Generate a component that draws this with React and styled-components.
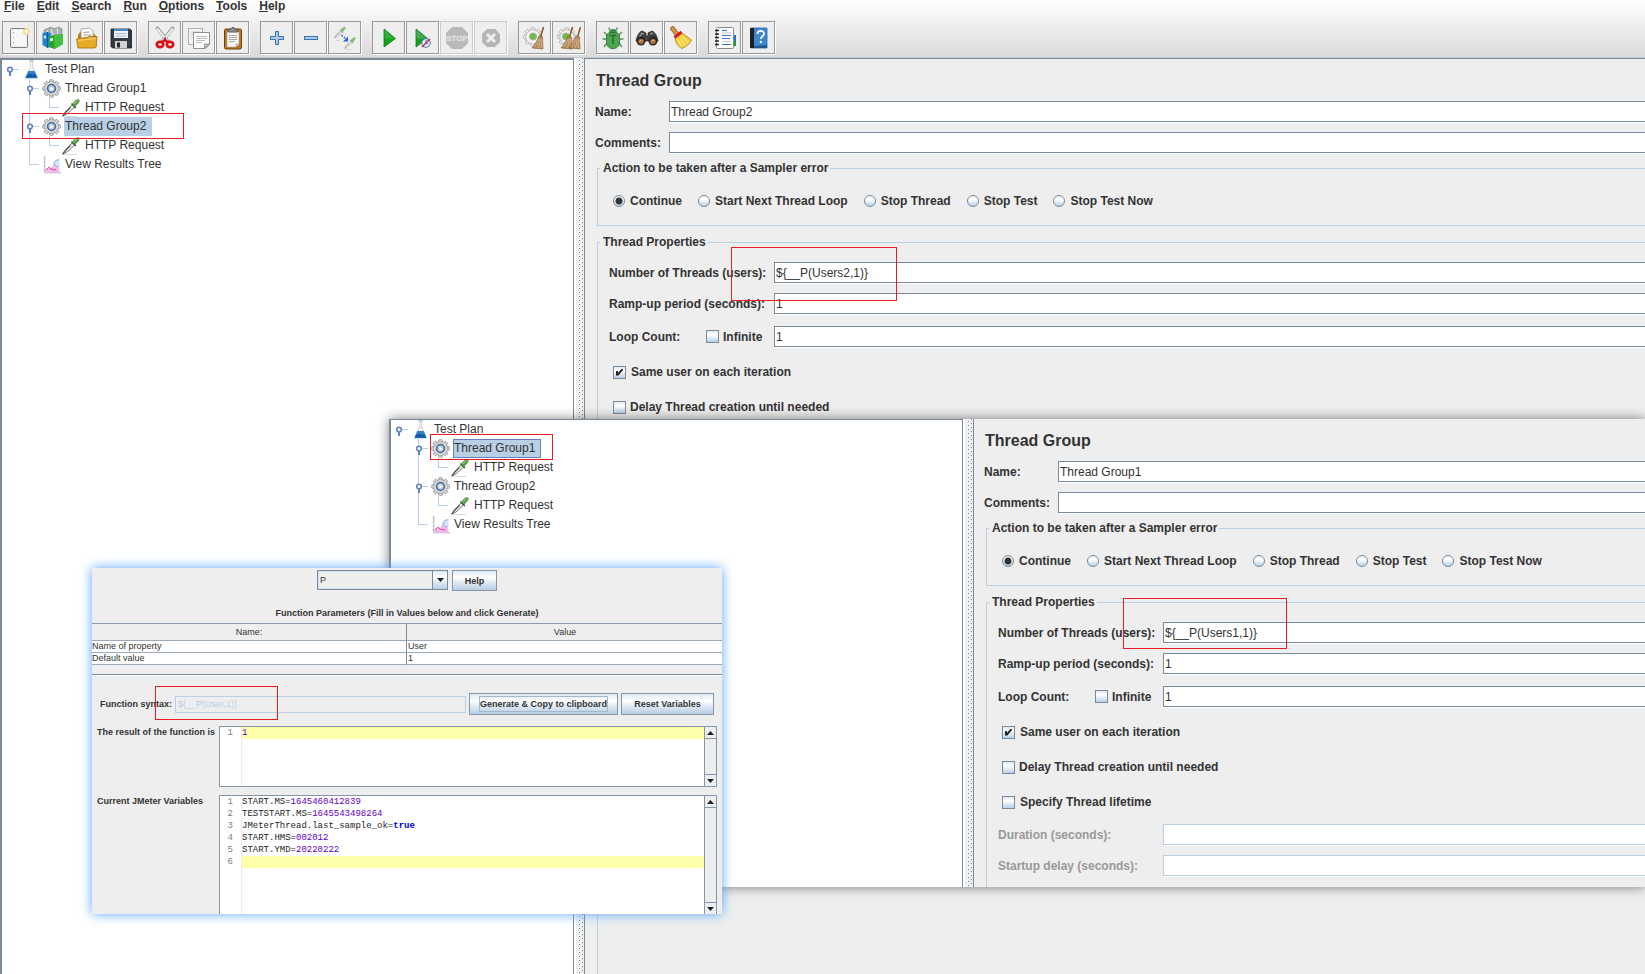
import React from 'react';
import styled, { createGlobalStyle, css } from 'styled-components';

const GlobalStyle = createGlobalStyle`
    * {
        box-sizing: border-box;
    }

    body {
        margin: 0;
        overflow: hidden;
        background-color: #eeeeee;
        color: #333333;
        font-family: "Liberation Sans", Arial, sans-serif;
        font-size: 12px;
    }

    button, input, select {
        font-family: inherit;
        font-size: inherit;
        color: inherit;
    }

    ul, ol {
        list-style: none;
        margin: 0;
        padding: 0;
    }
`;

const metal = 'linear-gradient(#dfe9f3, #ffffff 35%, #dbe6f1 65%, #b8cfe5)';

const Desktop = styled.div`
    position: relative;
    display: flex;
    flex-direction: column;
    min-height: 100vh;
    overflow: hidden;
`;

const Header = styled.header`
    height: 58px;
    background: linear-gradient(#ffffff, #dadada);
    border-bottom: 1px solid #c8ccd0;
`;

const MenuBar = styled.nav`
    display: flex;
    height: 21px;
`;

const MenuButton = styled.button`
    height: 12px;
    padding: 0 8px 0 4px;
    border: none;
    background: none;
    font-weight: bold;
    line-height: 12px;

    &:first-letter {
        text-decoration: underline;
    }
`;

const ToolBar = styled.div`
    display: flex;
    gap: 11px;
    padding-left: 2px;
`;

const ToolGroup = styled.div`
    display: flex;
    gap: 1px;
`;

const ToolButton = styled.button`
    display: flex;
    align-items: center;
    justify-content: center;
    width: 33px;
    height: 33px;
    padding: 0;
    border: 1px solid #999999;
    background-color: #eeeeee;
    box-shadow: 1px 1px 0 #ffffff;

    &:disabled {
        border-color: #cccccc;
    }
`;

const Split = styled.div`
    display: flex;
    flex: 1;
    overflow: hidden;
    background-color: #eeeeee;
`;

const TreePane = styled.div`
    flex: 0 0 574px;
    padding-left: 4px;
    border: solid #7a8a99;
    border-width: ${(props) => (props.$cut ? '1px' : '2px')} 1px 0 2px;
    background-color: #ffffff;
`;

const Divider = styled.div`
    flex: 0 0 10px;
    background:
        conic-gradient(at 1px 1px, transparent 75%, #7a8a99 0) 5px 2px / 10px 4px,
        conic-gradient(at 1px 1px, transparent 75%, #7a8a99 0) 8px 4px / 10px 4px,
        conic-gradient(at 1px 1px, transparent 75%, #ffffff 0) 6px 3px / 10px 4px,
        conic-gradient(at 1px 1px, transparent 75%, #ffffff 0) 4px 1px / 10px 4px,
        linear-gradient(90deg, #ffffff 2px, #eeeeee 2px);
`;

const Pane = styled.main`
    flex: 1;
    display: flex;
    flex-direction: column;
    min-width: 0;
    padding: 12px 0 0 10px;
    border-left: 1px solid #7a8a99;
    border-top: ${(props) => (props.$cut ? 'none' : '1px solid #7a8a99')};
`;

const Branch = styled.ul`
    margin-left: 20px;
    background: linear-gradient(#b8cfe5, #b8cfe5) no-repeat 3px 0 / 1px calc(100% - 10px);
`;

const Row = styled.div`
    display: flex;
    align-items: center;
    height: 19px;
`;

const Stub = styled.span`
    width: 16px;
    height: 19px;
    background: linear-gradient(#b8cfe5, #b8cfe5) no-repeat 3px 9px / 10px 1px;
`;

const NodeLabel = styled.span`
    height: 19px;
    margin-left: 3px;
    padding: 0 6px 0 1px;
    line-height: 19px;
    white-space: nowrap;
    ${(props) => props.$selected && css`
        background-color: #b8cfe5;
    `}
    ${(props) => props.$focused && css`
        box-shadow: inset 0 0 0 1px #6382bf;
    `}
`;

const Title = styled.h1`
    margin: 0 0 10px 1px;
    font-size: 16px;
    line-height: 20px;
`;

const Line = styled.div`
    display: flex;
    align-items: center;
    height: ${(props) => props.$height || '21px'};
    margin-bottom: ${(props) => props.$gap || '10px'};
    padding-left: ${(props) => (props.$check ? '4px' : '0')};
`;

const FieldLabel = styled.label`
    flex: 0 0 ${(props) => props.$width};
    font-weight: bold;
    white-space: nowrap;
    color: ${(props) => (props.$disabled ? '#999999' : 'inherit')};
`;

const TextField = styled.input`
    flex: 1;
    min-width: 0;
    height: 21px;
    padding: 0 1px;
    border: 1px solid #7a8a99;
    border-right: none;
    outline: none;
    background-color: #ffffff;
    box-shadow: 0 1px 0 #ffffff;

    &:disabled {
        border-color: #b8cfe5;
    }
`;

const Group = styled.fieldset`
    margin: 0 0 9px 2px;
    padding: 0;
    border: 1px solid #b8cfe5;
    border-right: none;
    min-width: 0;
    ${(props) => props.$grow && css`
        flex: 1;
        margin-bottom: 0;
        border-bottom: none;
    `}
`;

const GroupTitle = styled.legend`
    margin-left: 2px;
    padding: 0 2px 0 3px;
    font-weight: bold;
    line-height: 14px;
`;

const Radios = styled.div`
    display: flex;
    gap: 16px;
    height: 50px;
    padding: 16px 0 14px 15px;
`;

const Fields = styled.div`
    padding: 13px 0 0 11px;
`;

const Option = styled.label`
    display: flex;
    align-items: center;
    gap: ${(props) => props.$gap || '5px'};
    font-weight: bold;
    white-space: nowrap;
`;

const Radio = styled.input.attrs({ type: 'radio' })`
    appearance: none;
    width: 12px;
    height: 12px;
    margin: 0;
    border: 1px solid #7a8a99;
    border-radius: 50%;
    background: linear-gradient(#eef3f8, #ffffff 35%, #b8cfe5);

    &:checked {
        background: radial-gradient(circle, #333333 3px, transparent 4px), linear-gradient(#eef3f8, #ffffff 35%, #b8cfe5);
    }
`;

const Check = styled.input.attrs({ type: 'checkbox' })`
    appearance: none;
    display: grid;
    place-items: center;
    width: 13px;
    height: 13px;
    margin: 0;
    border: 1px solid #7a8a99;
    background: linear-gradient(#dfe9f3, #ffffff 35%, #b8cfe5);

    &:checked::before {
        content: '';
        width: 7px;
        height: 7px;
        background-color: #222222;
        clip-path: polygon(0 35%, 25% 35%, 30% 60%, 85% 0, 100% 0, 100% 20%, 35% 100%, 0 100%);
    }
`;

const LoopLine = styled.div`
    display: flex;
    align-items: center;
    flex: 0 0 165px;
`;

const FloatingWindow = styled.section`
    position: absolute;
    top: 419px;
    left: 389px;
    right: 0;
    display: flex;
    height: 468px;
    box-shadow: 0 0 11px rgba(0, 0, 0, 0.5);
`;

const Mark = styled.div`
    position: absolute;
    top: ${(props) => props.$top};
    left: ${(props) => props.$left};
    width: ${(props) => props.$width};
    height: ${(props) => props.$height};
    border: 1px solid #ed1c24;
    pointer-events: none;
`;

const Dialog = styled.section`
    position: absolute;
    top: 568px;
    left: 92px;
    display: flex;
    flex-direction: column;
    width: 630px;
    height: 346px;
    padding-top: 2px;
    background-color: #eeeeee;
    box-shadow: 0 0 11px #5aa5ff;
    font-size: 9px;
`;

const Chooser = styled.div`
    display: flex;
    justify-content: center;
    gap: 4px;
`;

const Combo = styled.div`
    display: flex;
    width: 131px;
    height: 20px;
    border: 1px solid #7a8a99;
    box-shadow: inset 0 0 0 1px #d5dfe9;
`;

const ComboSelect = styled.select`
    appearance: none;
    flex: 1;
    padding: 0 2px;
    border: none;
    outline: none;
    background: none;
`;

const ComboArrow = styled.span`
    display: flex;
    align-items: center;
    justify-content: center;
    width: 15px;
    border-left: 1px solid #7a8a99;
    background: ${metal};
`;

const PushButton = styled.button`
    width: ${(props) => props.$width};
    height: ${(props) => props.$height || '22px'};
    padding: 0;
    border: 1px solid #8496a8;
    background: ${metal};
    font-weight: bold;
    white-space: nowrap;

    span {
        padding: 2px 0;
        outline: ${(props) => (props.$focused ? '1px solid #a3b8cc' : 'none')};
    }
`;

const Caption = styled.h2`
    margin: 16px 0 4px;
    font-size: 9px;
    line-height: 12px;
    text-align: center;
`;

const ParamTable = styled.table`
    width: 100%;
    border-spacing: 0;
    border-top: 1px solid #8e9cab;
    table-layout: fixed;

    th, td {
        padding: 0;
        border-bottom: 1px solid #9caab8;
        line-height: 11px;
    }

    th {
        height: 17px;
        font-weight: normal;
    }

    td {
        height: 12px;
        background-color: #ffffff;
    }

    th + th, td + td {
        padding-left: 1px;
    }

    th:first-child, td:first-child {
        border-right: 1px solid #7a8a99;
    }
`;

const Rule = styled.hr`
    width: 100%;
    height: 2px;
    margin: 9px 0 17px;
    border: none;
    border-top: 1px solid #7a8a99;
    border-bottom: 1px solid #ffffff;
`;

const SyntaxRow = styled.div`
    display: flex;
    align-items: center;
    gap: 3px;
    margin-bottom: 11px;
    padding: 0 8px;
`;

const SyntaxField = styled.input`
    flex: 1;
    min-width: 0;
    height: 17px;
    padding: 0 2px;
    border: 1px solid #b8cfe5;
    background-color: #eeeeee;
    color: #b8cfe5;
`;

const EditorRow = styled.div`
    display: flex;
    flex-shrink: 0;
    align-items: flex-start;
    height: ${(props) => props.$height};
    margin-bottom: ${(props) => props.$gap || '0'};
    padding: 0 5px;
    overflow: hidden;
`;

const EditorLabel = styled.span`
    flex: 0 0 122px;
    font-weight: bold;
    line-height: 12px;
`;

const Editor = styled.div`
    flex: 1;
    display: flex;
    height: 100%;
    border: 1px solid #8496a8;
    border-bottom-width: ${(props) => (props.$open ? '0' : '1px')};
    background: linear-gradient(#eeeeee, #eeeeee) no-repeat 21px 0 / 1px 100% #ffffff;
`;

const Code = styled.ol`
    flex: 1;
    font-family: "Liberation Mono", "DejaVu Sans Mono", monospace;
    line-height: 12px;
`;

const CodeLine = styled.li`
    display: flex;
    height: 12px;
    white-space: pre;

    i {
        width: 13px;
        margin-right: 9px;
        color: #808080;
        font-style: normal;
        text-align: right;
    }

    code {
        flex: 1;
        background-color: ${(props) => (props.$current ? '#ffffaa' : 'transparent')};
        font-family: inherit;
        color: #222222;
    }

    b {
        color: #0000e0;
    }

    em {
        color: #6400c8;
        font-style: normal;
    }
`;

const ScrollBar = styled.div`
    display: flex;
    flex-direction: column;
    justify-content: space-between;
    width: 12px;
    border-left: 1px solid #8496a8;
    background-color: #eeeeee;
`;

const ScrollButton = styled.button`
    display: flex;
    align-items: center;
    justify-content: center;
    height: 12px;
    padding: 0;
    border: solid #8496a8;
    border-width: ${(props) => (props.$down ? '1px 0 0' : '0 0 1px')};
    background-color: #eeeeee;
`;

/* ---------- icons ---------- */

const Icon = ({ children, size = 24 }) => (
    <svg width={size} height={size} viewBox="0 0 24 24" aria-hidden="true">{children}</svg>
);

const Arrow = ({ down }) => (
    <svg width="7" height="4" viewBox="0 0 7 4" aria-hidden="true">
        <path d={down ? 'M0 0h7L3.5 4z' : 'M0 4h7L3.5 0z'} fill="#222" />
    </svg>
);

const NewIcon = () => (
    <Icon>
        <rect x="3.5" y="2.5" width="17" height="19" rx="1" fill="#eee" stroke="#7d7d7d" />
        <path d="M5 4h14v16H5z" fill="#f7f7f7" />
        <path d="M6.5 6v1M6.5 11v1M6.5 16v1" stroke="#999" />
        <circle cx="19.5" cy="5.5" r="3.500" fill="#f8d99c" />
        <circle cx="19.5" cy="5.5" r="1.600" fill="#fffbe8" />
    </Icon>
);

const TemplatesIcon = () => (
    <Icon>
        <path d="M3 4l6-2.5 5 1 4-1.5 3 2v11l-9 3-9-3z" fill="#a9b0b2" stroke="#777" strokeWidth=".6" />
        <path d="M6 4l2 5M10 3l2 6M16 2.500l1 6" stroke="#eee" />
        <path d="M1.5 7l5-1 3 1v14l-3 1-5-3z" fill="#1d83cf" />
        <path d="M6.5 6v15.500" stroke="#0b5696" />
        <path d="M2.8 9.500l2.400.3v3l-2.400-.6z" fill="#bde2ff" />
        <path d="M8 11l5-2 9-1v10l-8.500 5L8 21z" fill="#2ca02c" />
        <path d="M13 9.500l9-1.500v10l-8.500 5z" fill="#43c13e" />
        <path d="M9 12.500l3-.7v3l-3 .7z" fill="#d8ffd0" />
    </Icon>
);

const OpenIcon = () => (
    <Icon>
        <path d="M3 9l2-3h4l1 2h9.500l1.500 2v10H3z" fill="#c07f10" />
        <path d="M6 3l9-1 3 3 .5 9H6z" fill="#fafafa" stroke="#999" strokeWidth=".8" />
        <path d="M8.5 6.500l6-.5M8.5 9h8M8.5 11.500h8" stroke="#999" strokeWidth=".9" />
        <path d="M1.500 13l4-1h6l2-1.500h8.500l-.8 10.500-1.200 1H3z" fill="#e7a928" stroke="#a26c10" strokeWidth=".8" />
        <path d="M3 14.500l18-2" stroke="#f8d374" />
    </Icon>
);

const SaveIcon = () => (
    <Icon>
        <path d="M2 3h19l1.500 1.500V22H3.500L2 20.500z" fill="#333b42" stroke="#16191c" strokeWidth=".8" />
        <rect x="5" y="3" width="14" height="9" fill="#edf3fa" />
        <path d="M5 4h14" stroke="#4e86c4" strokeWidth="2" />
        <path d="M6.500 7.500h11M6.500 10h11" stroke="#a9b8c8" />
        <rect x="6" y="15" width="12" height="7" fill="#cfd2d4" />
        <rect x="8" y="16.500" width="3" height="5" fill="#252a2f" />
    </Icon>
);

const CutIcon = () => (
    <Icon>
        <path d="M4.500 2.500L14.500 15M19.500 2.500L9.500 15" stroke="#8b8f8c" strokeWidth="3.600" strokeLinecap="round" />
        <path d="M4.500 3L14 14.500M19.500 3L10 14.500" stroke="#eceeea" strokeWidth="2.200" strokeLinecap="round" />
        <circle cx="12" cy="12" r="1" fill="#555" />
        <ellipse cx="7" cy="18.500" rx="3.200" ry="2.700" fill="none" stroke="#d80f18" strokeWidth="2.700" />
        <ellipse cx="17" cy="18.500" rx="3.200" ry="2.700" fill="none" stroke="#d80f18" strokeWidth="2.700" />
        <path d="M9 16.500l3-2.500 3 2.500" fill="none" stroke="#d80f18" strokeWidth="2.500" />
    </Icon>
);

const CopyIcon = () => (
    <Icon>
        <rect x="1.500" y="2.500" width="14" height="16" fill="#f3f3f3" stroke="#b0b0b0" />
        <path d="M4 6h9M4 8.500h9M4 11h9" stroke="#ccc" />
        <path d="M6.500 6.500h16v12l-4.500 4H6.500z" fill="#fbfbfb" stroke="#8f8f8f" />
        <path d="M9 10.500h11M9 12.500h11M9 14.500h9M9 16.500h6" stroke="#bbb" />
        <path d="M22.500 18h-5v4.500z" fill="#ccc" stroke="#777" strokeWidth=".7" />
    </Icon>
);

const PasteIcon = () => (
    <Icon>
        <rect x="3.500" y="3" width="17" height="20" rx="1.500" fill="#b8751d" stroke="#714307" />
        <path d="M6 6h12v12l-3 3H6z" fill="#f6f6f6" stroke="#aaa" strokeWidth=".6" />
        <path d="M8 9.500h8M8 11.500h8M8 13.500h8M8 15.500h6" stroke="#aaa" />
        <path d="M7.500 6V3.500l3-.5.500-1.500h2l.5 1.500 3 .5V6z" fill="#8c9195" stroke="#4c4f51" strokeWidth=".8" />
        <path d="M18 17.500h-3.500V21z" fill="#bbb" />
    </Icon>
);

const PlusIcon = () => (
    <Icon>
        <path d="M10.500 5.500h3v5h5v3h-5v5h-3v-5h-5v-3h5z" fill="#a9cbed" stroke="#3b73b0" />
    </Icon>
);

const MinusIcon = () => (
    <Icon>
        <rect x="5.500" y="10.500" width="13" height="3" fill="#a9cbed" stroke="#3b73b0" />
    </Icon>
);

const Pipette = ({ pale }) => (
    <g>
        <path d="M1 23l2.500-5L13 8.500l3 3L6.500 20z" fill="#e8ebe8" stroke={pale ? '#aaa' : '#777'} strokeWidth="1.200" />
        <path d="M1 23l4-5 6-6" stroke={pale ? '#999' : '#222'} strokeWidth="1.200" fill="none" />
        <path d="M12 7l5.500 5.500" stroke={pale ? '#7d9b78' : '#335c2b'} strokeWidth="2" />
        <path d="M13 7.500c2.500-4 6-7 8.500-5.500s-1.500 6.500-5 9z" fill={pale ? '#7dbb70' : '#5c9f4c'} />
        <path d="M15 7.500l4-4" stroke="#a9d69c" strokeWidth="1.200" />
    </g>
);

const ToggleIcon = () => (
    <Icon>
        <g transform="translate(1 0) scale(.52)"><Pipette pale /></g>
        <g transform="translate(11 10.500) scale(.52)"><Pipette pale /></g>
        <path d="M8.500 9l4.500 4" stroke="#2463d6" strokeWidth="1.300" strokeDasharray="2 1" />
        <path d="M15 10.500v5h-5z" fill="#2463d6" />
        <path d="M2 14.500h5M12 23.500h6" stroke="#ccc" strokeWidth=".7" />
    </Icon>
);

const StartIcon = () => (
    <Icon>
        <path d="M7 3l11.500 9.500L7 21z" fill="#14a31b" stroke="#087a10" strokeWidth=".8" />
        <path d="M7.500 4l10 8.500H7.500z" fill="#48bb4b" opacity=".6" />
    </Icon>
);

const StartNoPauseIcon = () => (
    <Icon>
        <path d="M5 3l11.500 9.500L5 21z" fill="#14a31b" stroke="#087a10" strokeWidth=".8" />
        <path d="M5.500 4l10 8.500h-10z" fill="#63aa72" opacity=".7" />
        <circle cx="15" cy="17" r="4.300" fill="#e3effa" stroke="#3c7fbe" />
        <path d="M15 17v-3M15 17l2 1" stroke="#3c7fbe" />
        <path d="M11 21l8-8" stroke="#d2232a" strokeWidth="1.500" />
    </Icon>
);

const StopIcon = () => (
    <Icon>
        <path d="M7 1h10l6 6v10l-6 6H7l-6-6V7z" fill="#b9b9b9" />
        <text x="12" y="15" textAnchor="middle" fontSize="8" fontWeight="bold" fill="#e2e2e2" stroke="#e2e2e2" strokeWidth=".3">STOP</text>
    </Icon>
);

const ShutdownIcon = () => (
    <Icon>
        <path d="M8 3h8l5 5v8l-5 5H8l-5-5V8z" fill="#b5b5b5" />
        <path d="M8 8l8 8M16 8l-8 8" stroke="#eee" strokeWidth="3" />
    </Icon>
);

const teeth = [0, 45, 90, 135, 180, 225, 270, 315];

const Gear = ({ fill = '#f0f0f0', stroke = '#a8a8a8' }) => (
    <g fill={fill} stroke={stroke}>
        {teeth.map((angle) => (
            <rect key={angle} x="9.5" y=".8" width="5" height="6" rx="1.500" transform={`rotate(${angle} 12 12)`} />
        ))}
        <circle cx="12" cy="12" r="8.600" />
        <circle cx="12" cy="12" r="8" stroke="none" />
    </g>
);

const Broom = () => (
    <g>
        <path d="M20.500 1l-3 10" stroke="#8a5c30" strokeWidth="1.600" />
        <path d="M16 10l3.500 1 .5 12-11-1c3-3 5-7 7-12z" fill="#b58a5c" stroke="#80592e" strokeWidth=".6" />
        <path d="M16 13l-4 8M17.500 13l-2 9M19 13l-.5 9" stroke="#e2c49a" strokeWidth=".7" />
    </g>
);

const ClearIcon = () => (
    <Icon>
        <g transform="translate(0 1) scale(.82)"><Gear /></g>
        <circle cx="10" cy="10.500" r="3.500" fill="#66c23a" stroke="#aaa" />
        <Broom />
    </Icon>
);

const ClearAllIcon = () => (
    <Icon>
        <g transform="translate(0 1) scale(.82)"><Gear /></g>
        <circle cx="9" cy="10.500" r="3.500" fill="#66c23a" stroke="#aaa" />
        <g transform="translate(-5 0)"><Broom /></g>
        <g transform="translate(3 0)"><Broom /></g>
    </Icon>
);

const BugIcon = () => (
    <Icon>
        <path d="M6 9L3 6M18 9l3-3M5 13H1.500M19 13h3.500M6 17l-3 4M18 17l3 4M9 4L7.500 1.500M15 4l1.500-2.500" stroke="#5f8f5f" strokeWidth="1.400" fill="none" />
        <path d="M8 6c0-4 8-4 8 0l-1 2H9z" fill="#3b8e3d" />
        <path d="M5.500 9L8 6.500h8L18.500 9v7c0 9-13 9-13 0z" fill="#4ba650" stroke="#2a6e2f" strokeWidth=".8" />
        <path d="M8.500 9.500h7M12 9.500V18" stroke="#2b6b32" strokeWidth="1.600" fill="none" />
    </Icon>
);

const SearchIcon = () => (
    <Icon>
        <path d="M1 15c1-5 3-9 6-10l4 2v3h2V7l4-2c3 1 5 5 6 10z" fill="#444" stroke="#161616" strokeWidth=".7" />
        <path d="M6 7l3 1M18 7l-3 1M4.500 11l2-3" stroke="#aaa" strokeWidth="1.200" />
        <circle cx="6" cy="15" r="4.500" fill="#262626" />
        <circle cx="18" cy="15" r="4.500" fill="#262626" />
        <circle cx="6" cy="15.500" r="2.800" fill="#a66a3a" />
        <circle cx="18" cy="15.500" r="2.800" fill="#a66a3a" />
        <path d="M4.500 16c1-2 2-2 3-1.500M16.500 16c1-2 2-2 3-1.500" stroke="#e6c3a0" fill="none" />
    </Icon>
);

const ResetSearchIcon = () => (
    <Icon>
        <path d="M3.500 2.500l5 6.500" stroke="#9b5d20" strokeWidth="4.600" strokeLinecap="round" />
        <path d="M3.500 2.500l5 6.500" stroke="#d8974b" strokeWidth="3" strokeLinecap="round" />
        <path d="M6 12l7-5 9.500 7c-2 4-5 6.500-9.500 8.500-4-2-6-5-7-10.500z" fill="#f4d03f" stroke="#a87c10" strokeWidth=".8" />
        <path d="M9 14l4 7M12 13l4.500 6.500M13 10l6.500 7" stroke="#fff0a0" strokeWidth=".9" />
        <path d="M5.500 11.500l7-5.500" stroke="#c8201e" strokeWidth="3" />
    </Icon>
);

const FunctionIcon = () => (
    <Icon>
        <path d="M21 9h2v6h-2z" fill="#1e6fe0" />
        <path d="M21 15h2v5h-2z" fill="#1fa01f" />
        <rect x="3.500" y="1.500" width="17" height="21" rx="1" fill="#fff" stroke="#888" />
        <path d="M2 4.500h4M2 8h4M2 11.500h4M2 15h4M2 18.500h4" stroke="#222" strokeWidth="1.500" />
        <path d="M9 4.500h5M9 9.500h9M9 12.500h8M9 18.500h9" stroke="#3977c4" />
        <path d="M9 7h9M9 15.500h9" stroke="#aaa" strokeWidth=".7" />
    </Icon>
);

const HelpIcon = () => (
    <Icon>
        <path d="M4 2h16v20H4z" fill="#3c86d2" stroke="#2762a5" strokeWidth=".8" />
        <path d="M3 2h4v20H3z" fill="#1c1f24" />
        <path d="M7 20l13-1v3H7z" fill="#24558f" />
        <path d="M10.500 8c0-4 6.500-4 6.500-.3 0 2.300-3.200 2.500-3.200 5.300" fill="none" stroke="#fff" strokeWidth="1.800" />
        <circle cx="13.800" cy="16" r="1.200" fill="#fff" />
    </Icon>
);

const FlaskIcon = () => (
    <Icon size={19}>
        <path d="M10.500 1h3v8l5.500 12.500H5L10.500 9z" fill="#f2f5f8" stroke="#c0c8ce" />
        <path d="M8 14h8l4 9H4z" fill="#2f7fca" />
        <path d="M7 19c3-3 6 1 10-1l1.500 4H5z" fill="#1456a6" />
        <path d="M9 1h6" stroke="#aab3ba" />
    </Icon>
);

const GroupIcon = () => (
    <Icon size={19}>
        <Gear fill="#dcdcdc" stroke="#8e8e8e" />
        <circle cx="12" cy="12" r="5" fill="#b4cbe4" stroke="#4a6a92" strokeWidth="2" />
        <path d="M10.500 9.500l4.500 2.700-4.500 2.700z" fill="#fff" />
    </Icon>
);

const PipetteIcon = () => (
    <Icon size={19}>
        <Pipette />
        <path d="M3 23.500h16" stroke="#ccc" />
    </Icon>
);

const ResultsIcon = () => (
    <Icon size={19}>
        <path d="M3.500 1v21.500H24" fill="none" stroke="#a4a4ac" />
        <path d="M2 4h1.500M2 9h1.500M2 14h1.500M2 19h1.500" stroke="#a4a4ac" />
        <path d="M4.500 19l4-4 3.500 1 3-6 3 2 4 6v4H4.500z" fill="#f6b8ee" />
        <path d="M4.500 19l4-3.500 3.500 2.500 6 1" fill="none" stroke="#d8418b" strokeWidth="1.200" />
        <path d="M22 6c-5 0-8 3-6 6s3 4 6 2z" fill="#d4e6f8" />
        <path d="M22 6c-5 0-8 3-6 6s3 4 6 2" fill="none" stroke="#7da6d8" strokeWidth="1.200" />
    </Icon>
);

const Handle = () => (
    <svg width="16" height="19" viewBox="0 0 16 19" aria-hidden="true">
        <path d="M6 9.500h7" stroke="#b8cfe5" />
        <path d="M4 11v5" stroke="#6382bf" strokeWidth="2" />
        <circle cx="4" cy="9.500" r="2.300" fill="#fff" stroke="#6382bf" strokeWidth="1.600" />
    </svg>
);

/* ---------- parts ---------- */

const menus = ['File', 'Edit', 'Search', 'Run', 'Options', 'Tools', 'Help'];

const tools = [
    [['New', NewIcon], ['Templates', TemplatesIcon], ['Open', OpenIcon], ['Save', SaveIcon]],
    [['Cut', CutIcon], ['Copy', CopyIcon], ['Paste', PasteIcon]],
    [['Expand All', PlusIcon], ['Collapse All', MinusIcon], ['Toggle', ToggleIcon]],
    [['Start', StartIcon], ['Start no pauses', StartNoPauseIcon], ['Stop', StopIcon, true], ['Shutdown', ShutdownIcon, true]],
    [['Clear', ClearIcon], ['Clear All', ClearAllIcon]],
    [['Debug', BugIcon], ['Search', SearchIcon], ['Reset Search', ResetSearchIcon]],
    [['Function Helper Dialog', FunctionIcon], ['Help', HelpIcon]],
];

const actions = ['Continue', 'Start Next Thread Loop', 'Stop Thread', 'Stop Test', 'Stop Test Now'];

function Node({ icon: NodeIcon, label, leaf, selected, focused, children }) {
    return (
        <li>
            <Row>
                {leaf ? <Stub /> : <Handle />}
                <NodeIcon />
                <NodeLabel $selected={selected} $focused={focused}>{label}</NodeLabel>
            </Row>
            {children && <Branch>{children}</Branch>}
        </li>
    );
}

function Tree({ selected, focused }) {
    return (
        <ul>
            <Node icon={FlaskIcon} label='Test Plan'>
                {['Thread Group1', 'Thread Group2'].map((name) => (
                    <Node
                        key={name}
                        icon={GroupIcon}
                        label={name}
                        selected={name === selected}
                        focused={focused && name === selected}
                    >
                        <Node icon={PipetteIcon} label='HTTP Request' leaf />
                    </Node>
                ))}
                <Node icon={ResultsIcon} label='View Results Tree' leaf />
            </Node>
        </ul>
    );
}

function ThreadGroup({ id, name, threads, cut }) {
    return (
        <Pane $cut={cut}>
            <Title>Thread Group</Title>
            <Line>
                <FieldLabel $width='74px' htmlFor={`${id}-name`}>Name:</FieldLabel>
                <TextField id={`${id}-name`} defaultValue={name} />
            </Line>
            <Line $gap='8px'>
                <FieldLabel $width='74px' htmlFor={`${id}-comments`}>Comments:</FieldLabel>
                <TextField id={`${id}-comments`} />
            </Line>

            <Group>
                <GroupTitle>Action to be taken after a Sampler error</GroupTitle>
                <Radios>
                    {actions.map((action, i) => (
                        <Option key={action}>
                            <Radio name={`${id}-action`} defaultChecked={i === 0} />
                            {action}
                        </Option>
                    ))}
                </Radios>
            </Group>

            <Group $grow>
                <GroupTitle>Thread Properties</GroupTitle>
                <Fields>
                    <Line>
                        <FieldLabel $width='165px' htmlFor={`${id}-threads`}>Number of Threads (users):</FieldLabel>
                        <TextField id={`${id}-threads`} defaultValue={threads} />
                    </Line>
                    <Line $gap='12px'>
                        <FieldLabel $width='165px' htmlFor={`${id}-ramp`}>Ramp-up period (seconds):</FieldLabel>
                        <TextField id={`${id}-ramp`} defaultValue='1' />
                    </Line>
                    <Line $gap='15px'>
                        <LoopLine>
                            <FieldLabel $width='97px' htmlFor={`${id}-loops`}>Loop Count:</FieldLabel>
                            <Option $gap='4px'><Check />Infinite</Option>
                        </LoopLine>
                        <TextField id={`${id}-loops`} defaultValue='1' />
                    </Line>
                    <Line $check $height='20px' $gap='15px'>
                        <Option><Check defaultChecked />Same user on each iteration</Option>
                    </Line>
                    <Line $check $height='20px' $gap='15px'>
                        <Option $gap='4px'><Check />Delay Thread creation until needed</Option>
                    </Line>
                    {cut && (
                        <>
                            <Line $check $height='20px' $gap='12px'>
                                <Option><Check />Specify Thread lifetime</Option>
                            </Line>
                            <Line>
                                <FieldLabel $disabled $width='165px' htmlFor={`${id}-duration`}>Duration (seconds):</FieldLabel>
                                <TextField id={`${id}-duration`} disabled />
                            </Line>
                            <Line $gap='0'>
                                <FieldLabel $disabled $width='165px' htmlFor={`${id}-delay`}>Startup delay (seconds):</FieldLabel>
                                <TextField id={`${id}-delay`} disabled />
                            </Line>
                        </>
                    )}
                </Fields>
            </Group>
        </Pane>
    );
}

function Scroll() {
    return (
        <ScrollBar>
            <ScrollButton aria-label='Scroll up'><Arrow /></ScrollButton>
            <ScrollButton $down aria-label='Scroll down'><Arrow down /></ScrollButton>
        </ScrollBar>
    );
}

function FunctionHelper() {
    return (
        <Dialog>
            <Chooser>
                <Combo>
                    <ComboSelect aria-label='Function'><option>P</option></ComboSelect>
                    <ComboArrow><Arrow down /></ComboArrow>
                </Combo>
                <PushButton $width='45px' $height='21px'>Help</PushButton>
            </Chooser>
            <Caption>Function Parameters (Fill in Values below and click Generate)</Caption>
            <ParamTable>
                <thead>
                    <tr><th>Name:</th><th>Value</th></tr>
                </thead>
                <tbody>
                    <tr><td>Name of property</td><td>User</td></tr>
                    <tr><td>Default value</td><td>1</td></tr>
                </tbody>
            </ParamTable>
            <Rule />
            <SyntaxRow>
                <FieldLabel $width='68px' htmlFor='syntax'>Function syntax:</FieldLabel>
                <SyntaxField id='syntax' readOnly value='${__P(User,1)}' />
                <PushButton $width='149px' $focused><span>Generate &amp; Copy to clipboard</span></PushButton>
                <PushButton $width='93px'>Reset Variables</PushButton>
            </SyntaxRow>
            <EditorRow $height='61px' $gap='8px'>
                <EditorLabel>The result of the function is</EditorLabel>
                <Editor>
                    <Code>
                        <CodeLine $current><i>1</i><code><em>1</em></code></CodeLine>
                    </Code>
                    <Scroll />
                </Editor>
            </EditorRow>
            <EditorRow $height='119px'>
                <EditorLabel>Current JMeter Variables</EditorLabel>
                <Editor $open>
                    <Code>
                        <CodeLine><i>1</i><code>START.MS=<em>1645460412839</em></code></CodeLine>
                        <CodeLine><i>2</i><code>TESTSTART.MS=<em>1645543498264</em></code></CodeLine>
                        <CodeLine><i>3</i><code>JMeterThread.last_sample_ok=<b>true</b></code></CodeLine>
                        <CodeLine><i>4</i><code>START.HMS=<em>002012</em></code></CodeLine>
                        <CodeLine><i>5</i><code>START.YMD=<em>20220222</em></code></CodeLine>
                        <CodeLine $current><i>6</i><code /></CodeLine>
                    </Code>
                    <Scroll />
                </Editor>
            </EditorRow>
            <Mark $left='63px' $top='118px' $width='123px' $height='34px' />
        </Dialog>
    );
}

function App() {
    return (
        <Desktop>
            <GlobalStyle />
            <Header>
                <MenuBar>
                    {menus.map((menu) => <MenuButton key={menu}>{menu}</MenuButton>)}
                </MenuBar>
                <ToolBar>
                    {tools.map((group) => (
                        <ToolGroup key={group[0][0]}>
                            {group.map(([label, ToolIcon, disabled]) => (
                                <ToolButton key={label} aria-label={label} disabled={disabled}>
                                    <ToolIcon />
                                </ToolButton>
                            ))}
                        </ToolGroup>
                    ))}
                </ToolBar>
            </Header>

            <Split>
                <TreePane><Tree selected='Thread Group2' /></TreePane>
                <Divider />
                <ThreadGroup id='group2' name='Thread Group2' threads='${__P(Users2,1)}' />
            </Split>
            <Mark $left='22px' $top='113px' $width='162px' $height='26px' />
            <Mark $left='731px' $top='247px' $width='166px' $height='54px' />

            <FloatingWindow>
                <Split>
                    <TreePane $cut><Tree selected='Thread Group1' focused /></TreePane>
                    <Divider />
                    <ThreadGroup id='group1' name='Thread Group1' threads='${__P(Users1,1)}' cut />
                </Split>
                <Mark $left='41px' $top='15px' $width='123px' $height='26px' />
                <Mark $left='734px' $top='179px' $width='164px' $height='51px' />
            </FloatingWindow>

            <FunctionHelper />
        </Desktop>
    );
}

export default App;
